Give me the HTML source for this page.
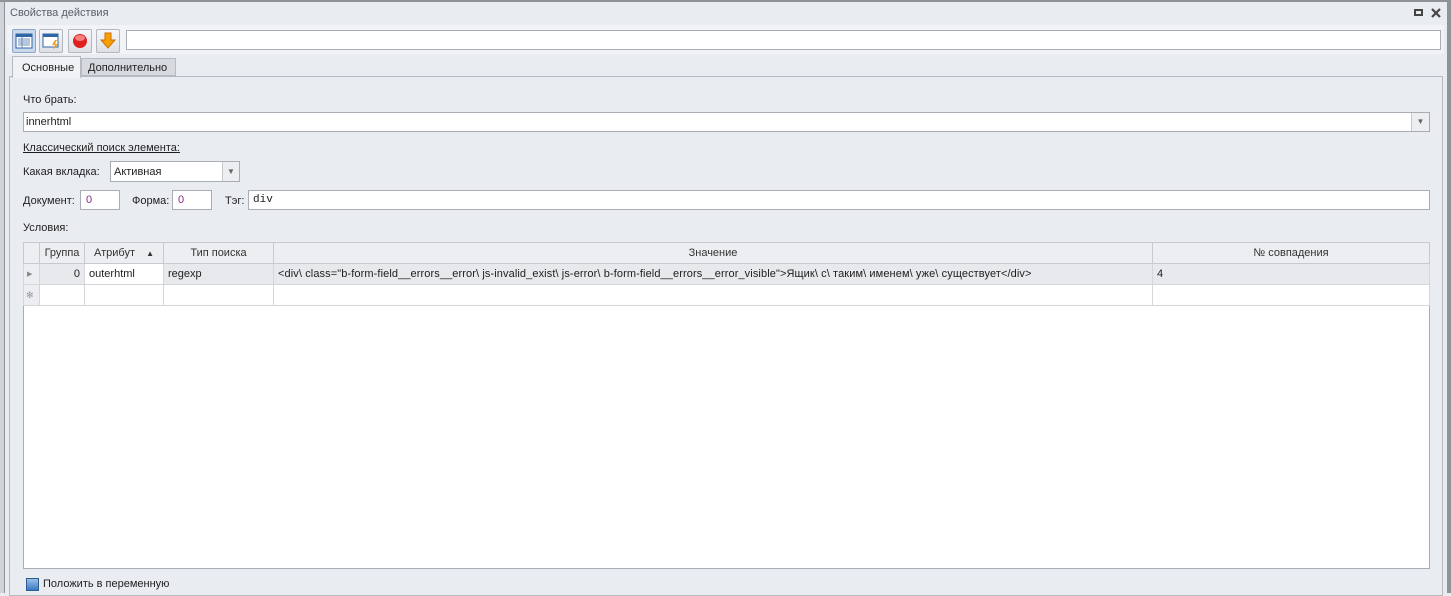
<!DOCTYPE html>
<html><head><meta charset="utf-8"><style>
*{box-sizing:border-box;margin:0;padding:0}
body{width:1451px;height:593px;background:#e9ecf1;font-family:"Liberation Sans",sans-serif;font-size:11px;color:#1e1e1e;position:relative;overflow:hidden}
.a{position:absolute}
.inp{position:absolute;background:#fff;border:1px solid #a9adb3}
.btn{position:absolute;top:29px;width:24px;height:24px;border:1px solid #b4b8be;border-radius:2px;background:linear-gradient(#f6f7f9,#dde0e5)}
table{border-collapse:collapse;position:absolute;left:23px;top:242px;table-layout:fixed}
td{border:1px solid #d3d6db;height:21px;padding:0 4px;white-space:nowrap;overflow:hidden;font-size:11px}
.hd td{background:#eceef2;color:#333;text-align:center;border-color:#c6c9ce}
</style></head><body>
<div class="a" style="left:0;top:0;width:5px;height:593px;background:#d0d3d8;border-right:1px solid #8f9297"></div>
<div class="a" style="left:1447px;top:0;width:4px;height:593px;background:#8f9297"></div>
<div class="a" style="left:0;top:0;width:1451px;height:2px;background:#8f9297"></div>
<div class="a" style="left:10px;top:7px;color:#5a5f66;font-size:11px">Свойства действия</div>
<div class="a" style="left:1414px;top:9px;width:9px;height:7px;border:2px solid #444;border-top-width:2px"></div>
<svg class="a" style="left:1431px;top:8px" width="10" height="10"><path d="M1 1l8 8M9 1l-8 8" stroke="#444" stroke-width="2.2"/></svg>
<div class="a" style="left:7px;top:25px;width:1437px;height:29px;background:#f1f3f6"></div>
<div class="btn" style="left:12px;background:#c9d8ea;border-color:#8ea6c2"><svg width="22" height="22"><rect x="3" y="4" width="16" height="14" fill="#fff" stroke="#2f66a6"/><rect x="3" y="4" width="16" height="3" fill="#2f66a6"/><path d="M5 9h12M5 11h12M5 13h12M5 15h12M9 7v11" stroke="#6f8fb8"/></svg></div>
<div class="btn" style="left:39px"><svg width="22" height="22"><rect x="3" y="4" width="15" height="13" fill="#fff" stroke="#2f66a6"/><rect x="3" y="4" width="15" height="3" fill="#2f66a6"/><path d="M15 10l-3 5h3l-2 5 5-6h-3l2-4z" fill="#f0a020"/></svg></div>
<div class="btn" style="left:68px"><svg width="22" height="22"><circle cx="11" cy="11" r="7" fill="#e02020"/><ellipse cx="11" cy="8" rx="5" ry="3" fill="#f58080"/></svg></div>
<div class="btn" style="left:96px"><svg width="22" height="22"><path d="M8 3h6v7h4l-7 8-7-8h4z" fill="#f7a000" stroke="#d07000"/></svg></div>
<div class="inp" style="left:126px;top:30px;width:1315px;height:20px"></div>
<div class="a" style="left:9px;top:76px;width:1434px;height:520px;border:1px solid #b7bbc1;background:#e9ecf1"></div>
<div class="a" style="left:12px;top:56px;width:69px;height:22px;background:#f0f2f5;border:1px solid #b7bbc1;border-bottom:none;padding:5px 0 0 9px">Основные</div>
<div class="a" style="left:81px;top:58px;width:95px;height:18px;background:#d6dadf;border:1px solid #b7bbc1;padding:3px 0 0 6px">Дополнительно</div>
<div class="a" style="left:23px;top:94px">Что брать:</div>
<div class="inp" style="left:23px;top:112px;width:1407px;height:20px;padding:3px 0 0 2px">innerhtml</div>
<div class="a" style="left:1411px;top:113px;width:18px;height:18px;background:#eceef1;border-left:1px solid #c6c9ce;color:#666;font-size:8px;text-align:center;line-height:18px">▼</div>
<div class="a" style="left:23px;top:142px;text-decoration:underline">Классический поиск элемента:</div>
<div class="a" style="left:23px;top:166px">Какая вкладка:</div>
<div class="inp" style="left:110px;top:161px;width:130px;height:21px;padding:4px 0 0 3px">Активная</div>
<div class="a" style="left:222px;top:162px;width:17px;height:19px;background:#eceef1;border-left:1px solid #c6c9ce;color:#666;font-size:8px;text-align:center;line-height:19px">▼</div>
<div class="a" style="left:23px;top:195px">Документ:</div>
<div class="inp" style="left:80px;top:190px;width:40px;height:20px;padding:3px 0 0 5px;color:#8a2a8a">0</div>
<div class="a" style="left:132px;top:195px">Форма:</div>
<div class="inp" style="left:172px;top:190px;width:40px;height:20px;padding:3px 0 0 5px;color:#8a2a8a">0</div>
<div class="a" style="left:225px;top:195px">Тэг:</div>
<div class="inp" style="left:248px;top:190px;width:1182px;height:20px;padding:3px 0 0 4px;font-family:'Liberation Mono',monospace">div</div>
<div class="a" style="left:23px;top:222px">Условия:</div>
<div class="a" style="left:23px;top:242px;width:1407px;height:327px;background:#fff;border:1px solid #a9adb3"></div>
<table>
<colgroup><col style="width:16px"><col style="width:45px"><col style="width:79px"><col style="width:110px"><col style="width:879px"><col style="width:277px"></colgroup>
<tr class="hd"><td></td><td>Группа</td><td>Атрибут <span style="font-size:8px;margin-left:8px">▲</span></td><td>Тип поиска</td><td>Значение</td><td>№ совпадения</td></tr>
<tr style="background:#e8e9ed"><td style="background:#eceef2;color:#888;font-size:7px;padding:0 3px">▶</td><td style="text-align:right">0</td><td style="background:#fff">outerhtml</td><td>regexp</td><td><span style="letter-spacing:0.1px">&lt;div\ class="b-form-field__errors__error\ js-invalid_exist\ js-error\ b-form-field__errors__error_visible"&gt;Ящик\ с\ таким\ именем\ уже\ существует&lt;/div&gt;</span></td><td>4</td></tr>
<tr style="background:#fff"><td style="background:#eceef2;color:#999;font-size:9px;padding:0 2px">✻</td><td></td><td></td><td></td><td></td><td></td></tr>
</table>
<div class="a" style="left:26px;top:578px;width:13px;height:13px;border:1px solid #2a5b93;background:linear-gradient(#9cc0e8,#3a78c0)"></div>
<div class="a" style="left:43px;top:578px">Положить в переменную</div>
</body></html>
